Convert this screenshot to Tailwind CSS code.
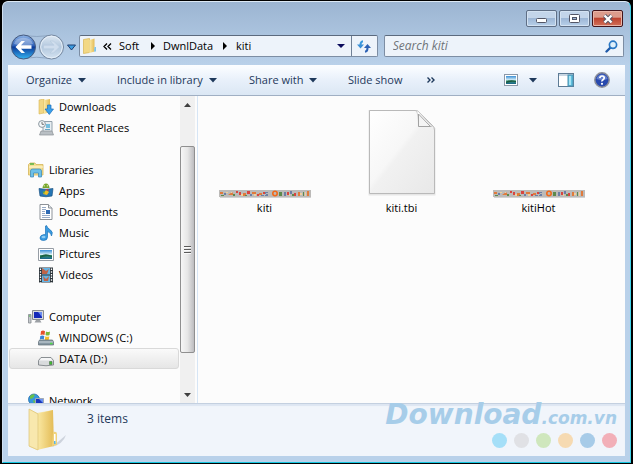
<!DOCTYPE html>
<html lang="en">
  <head>
    <meta charset="UTF-8" />
    <meta name="viewport" content="width=device-width, initial-scale=1.0" />
    <title>kiti</title>
    <script src="https://cdn.jsdelivr.net/npm/@tailwindcss/browser@4"></script>
  </head>

  <body class="bg-black font-['Open_Sans','Noto_Sans',sans-serif] text-[11px] leading-4 text-black">
    <!-- Shared drawings -->
    <svg class="absolute size-0">
      <defs>
        <linearGradient id="folder" x1="0" x2="1" y1="0" y2="0">
          <stop offset="0" stop-color="#fbeaa6" />
          <stop offset="1" stop-color="#e3bb55" />
        </linearGradient>
        <linearGradient id="blueBall" x1="0" x2="0" y1="0" y2="1">
          <stop offset="0" stop-color="#8fb4e6" />
          <stop offset="0.45" stop-color="#2c5fb8" />
          <stop offset="0.5" stop-color="#0b3a99" />
          <stop offset="1" stop-color="#35b5f2" />
        </linearGradient>
        <linearGradient id="grayBall" x1="0" x2="0" y1="0" y2="1">
          <stop offset="0" stop-color="#dfe9f3" />
          <stop offset="0.5" stop-color="#b3c8de" />
          <stop offset="1" stop-color="#d5e3f1" />
        </linearGradient>
        <linearGradient id="paper" x1="0" x2="1" y1="0" y2="1">
          <stop offset="0" stop-color="#ffffff" />
          <stop offset="0.45" stop-color="#f7f7f7" />
          <stop offset="0.5" stop-color="#f1f1f1" />
          <stop offset="1" stop-color="#e8e8e8" />
        </linearGradient>
        <linearGradient id="sky" x1="0" x2="0" y1="0" y2="1">
          <stop offset="0" stop-color="#3a8fd6" />
          <stop offset="0.5" stop-color="#d9f0f7" />
          <stop offset="0.6" stop-color="#3f9a79" />
          <stop offset="1" stop-color="#16618a" />
        </linearGradient>
      </defs>
      <symbol id="strip" viewBox="0 0 92 8">
        <rect width="92" height="7" fill="#bcbab8" />
        <g fill="#e07a3c">
          <path d="M1 2h3v2h-3zM9 5l4-3 2 3zM24 3h3v3h-3zM33 2h4v2h-4zM40 3h3v2h-3zM79 2h2v4h-2zM88 1h2v5h-2z" />
        </g>
        <g fill="#d8453f">
          <path d="M17 1h2v2h-2zM20 2h2v3h-2zM28 1h3v3h-3zM38 4h2v2h-2zM44 2h2v2h-2zM68 2h2v3h-2zM75 3h2v3h-2z" />
        </g>
        <g fill="#5d8a4c">
          <path d="M2 5h3v1h-3zM14 4h2v2h-2zM26 5h2v1h-2zM60 2h3v4h-3zM73 4h2v2h-2zM84 2h1v4h-1z" />
        </g>
        <g fill="#6c7fa6">
          <path d="M5 3h2v2h-2zM31 4h2v2h-2zM46 2h3v1h-2v1h2v2h-3v-1h1v-1h-1zM42 5h3v1h-3zM65 2h2v4h-2zM71 1h2v3h-2z" />
        </g>
        <g fill="#f0cf9c">
          <path d="M7 2h2v1h-2zM12 2h1v1h-1zM22 4h2v2h-2zM35 4h2v2h-2zM70 4h1v2h-1zM81 3h2v2h-2zM86 2h1v4h-1z" />
        </g>
        <circle cx="56" cy="3.5" r="2.2" fill="none" stroke="#f06a1c" stroke-width="1.6" />
        <path d="M1 7h91v1H1z" fill="#d2d2d2" />
      </symbol>
      <symbol id="caret" viewBox="0 0 8 5">
        <path d="M0 0h8L4 4.500z" fill="#1e395b" />
      </symbol>
    </svg>

    <div class="flex h-screen min-h-[320px] flex-col overflow-hidden rounded-t-md border-t border-r-2 border-b border-l-2 border-black bg-black">
      <div class="flex min-h-0 flex-1 flex-col rounded-t-md border-t border-r border-b border-l border-t-[#dce9f5] border-r-[#3fd3ea] border-b-[#15c6e0] border-l-[#cfdff0] bg-[#b9d1ea] bg-linear-to-b from-[#9cb5d2] to-[#b9d1ea] to-[64px] px-[5px] pb-[6px]">
        <!-- Window buttons -->
        <div class="flex h-[33px] shrink-0 items-start justify-end gap-[2px] pt-2 pr-[2px]">
          <button aria-label="Minimize" class="flex h-[17px] w-[31px] items-center justify-center rounded-[2px] border border-[#5f6f86] bg-linear-to-b from-[#c3d5ea] from-45% via-[#9db7d6] via-50% to-[#b8d0ea] shadow-[inset_0_0_0_1px_#d3e2f2]">
            <svg class="mt-[4px] h-[5px] w-[11px]" viewBox="0 0 11 5"><rect x="0.5" y="0.5" width="10" height="4" rx="1" fill="#fff" stroke="#535666" /></svg>
          </button>
          <button aria-label="Maximize" class="flex h-[17px] w-[31px] items-center justify-center rounded-[2px] border border-[#5f6f86] bg-linear-to-b from-[#c3d5ea] from-45% via-[#9db7d6] via-50% to-[#b8d0ea] shadow-[inset_0_0_0_1px_#d3e2f2]">
            <svg class="h-[9px] w-[11px]" viewBox="0 0 11 9"><rect x="0.5" y="0.5" width="10" height="8" rx="1" fill="#fff" stroke="#535666" /><rect x="3.500" y="3.500" width="4" height="2" fill="#9db7d6" stroke="#535666" /></svg>
          </button>
          <button aria-label="Close" class="flex h-[17px] w-[31px] items-center justify-center rounded-[2px] border border-[#43141a] bg-linear-to-b from-[#dc9c8c] from-40% via-[#bd4430] via-50% to-[#d2705a] shadow-[inset_0_0_0_1px_#e8b5a8]">
            <svg class="h-[10px] w-[12px]" viewBox="0 0 12 10"><path d="M2.500 1.500l7 7M9.500 1.500l-7 7" stroke="#535666" stroke-width="4.200" /><path d="M2.500 1.500l7 7M9.500 1.500l-7 7" stroke="#fff" stroke-width="2.400" /></svg>
          </button>
        </div>

        <!-- Navigation row -->
        <div class="flex h-[30px] shrink-0 items-start pr-px">
          <div class="flex w-[71px] shrink-0 items-center pl-px">
            <svg class="-mt-px h-[26px] w-[68px]" viewBox="0 0 68 26" fill="none">
              <path d="M13 1.500Q28 3.500 42 1.500M13 24.500Q28 22 42 24.500" stroke="#8ea6c2" />
              <circle cx="14.500" cy="13" r="12" fill="url(#blueBall)" stroke="#44597e" />
              <path d="M5 10a10 9 0 0 1 19 0q-9 3-19 0z" fill="#fff" fill-opacity="0.3" />
              <path d="M6.500 13l6-6h3.500l-4 4.200h10.500v3.600H12l4 4.200h-3.500z" fill="#fff" />
              <circle cx="42.500" cy="13" r="12" fill="url(#grayBall)" stroke="#74869e" />
              <circle cx="42.500" cy="13" r="10.800" stroke="#e6eff8" />
              <path d="M50.500 13l-6-6H41l4 4.200H34.500v3.600H45l-4 4.200h3.500z" fill="#cfdded" stroke="#b5c9dd" stroke-width="0.600" />
              <path d="M58.500 11h8l-4 5z" fill="#3c9ce0" stroke="#1f3f72" />
            </svg>
          </div>
          <div class="flex h-[22px] min-w-0 flex-1 items-stretch rounded-[2px] border border-[#7c8da3] border-t-[#5b6a7e] bg-[#edf3fa]">
            <div class="flex min-w-0 flex-1 items-center pl-[3px]">
              <svg class="h-4 w-[14px]" viewBox="0 0 14 16"><path d="M0.500 1.500l6-1v14l-6 1z" fill="#f2d885" stroke="#d8b552" stroke-width="0.700" /><path d="M6.500 2l5-1.500v13l-5 1.500z" fill="url(#folder)" /><path d="M11.500 9h1.500v4.500h-2z" fill="#7fc4ea" /></svg>
              <button aria-label="Previous locations" class="ml-[6px] h-5 w-[9px]"><svg class="h-[7px] w-[9px]" viewBox="0 0 9 7" fill="none" stroke="#000" stroke-width="1.300"><path d="M4 0.500l-3 3 3 3M8 0.500l-3 3 3 3" /></svg></button>
              <button class="ml-[7px] w-[24px] text-left">Soft</button>
              <svg class="ml-2 h-[8px] w-[4px]" viewBox="0 0 4 8"><path d="M0 0l4 4-4 4z" /></svg>
              <button class="ml-[8px] w-[54px] text-left whitespace-nowrap">DwnlData</button>
              <svg class="ml-[6px] h-[8px] w-[4px]" viewBox="0 0 4 8"><path d="M0 0l4 4-4 4z" /></svg>
              <button class="ml-[9px]">kiti</button>
              <button aria-label="Address history" class="mr-[6px] ml-auto h-5"><svg class="h-[4px] w-[8px]" viewBox="0 0 8 4"><path d="M0 0h8L4 4z" fill="#0b0b5c" /></svg></button>
            </div>
            <button aria-label="Refresh" class="flex w-[26px] items-center justify-center border-l border-[#6f8096]">
              <svg class="h-[13px] w-[14px]" viewBox="0 0 14 13" fill="none"><path d="M6 1.200Q3.500 1.500 3.500 5" stroke="#3a9ade" stroke-width="2" /><path d="M0 4.500h7L3.500 8.500z" fill="#3a8fd6" /><path d="M8 11.800Q10.500 11.500 10.500 8" stroke="#2d62b5" stroke-width="2" /><path d="M7 8h7L10.500 4z" fill="#2d62b5" /></svg>
            </button>
          </div>
          <div class="ml-[6px] flex h-[22px] shrink-0 basis-[39%] items-center rounded-[2px] border border-[#7c8da3] border-t-[#5b6a7e] bg-[#edf3fa] pr-[5px] pl-2">
            <input type="text" aria-label="Search kiti" placeholder="Search kiti" class="min-w-0 flex-1 bg-transparent text-xs italic outline-none placeholder:text-[#6f7379]" />
            <svg class="h-[13px] w-[13px]" viewBox="0 0 13 13" fill="none"><path d="M5.500 7.500L1.500 11.500" stroke="#1f5aa8" stroke-width="2.400" stroke-linecap="round" /><circle cx="8" cy="4.800" r="3.600" fill="#dff0fb" stroke="#2a78c4" stroke-width="1.700" /></svg>
          </div>
        </div>

        <!-- Command bar -->
        <div class="flex h-[31px] shrink-0 items-center border-t border-b border-t-[#fbfdff] border-b-[#a0afc3] bg-linear-to-b from-[#f9fcff] from-5% via-[#e8f0fa] via-50% to-[#dbe7f4] pb-px pl-[18px] text-[#1e395b]">
          <button class="flex w-[91px] items-center gap-[6px]">Organize<svg class="h-[5px] w-2"><use href="#caret" /></svg></button>
          <button class="flex w-[132px] items-center gap-[6px] whitespace-nowrap">Include in library<svg class="h-[5px] w-2"><use href="#caret" /></svg></button>
          <button class="flex w-[99px] items-center gap-[6px] whitespace-nowrap">Share with<svg class="h-[5px] w-2"><use href="#caret" /></svg></button>
          <button class="w-[79px] text-left whitespace-nowrap">Slide show</button>
          <button aria-label="More commands"><svg class="h-[6px] w-2" viewBox="0 0 8 6" fill="none" stroke="#1e395b" stroke-width="1.400"><path d="M0.500 0.500l2.500 2.500-2.500 2.500M4.500 0.500l2.500 2.500-2.500 2.500" /></svg></button>
          <div class="mr-[15px] ml-auto flex items-center">
            <button aria-label="Change your view"><svg class="h-3 w-[14px]" viewBox="0 0 14 12"><rect x="0.500" y="0.500" width="13" height="11" fill="#fff" stroke="#8b98a8" /><rect x="2" y="2" width="10" height="8" fill="url(#sky)" /><path d="M2 8q4-3 10-1v1q-5-1-10 1z" fill="#1c5a41" /></svg></button>
            <button aria-label="View options" class="ml-[11px]"><svg class="h-[5px] w-2"><use href="#caret" /></svg></button>
            <button aria-label="Preview pane" class="ml-[21px]"><svg class="h-[14px] w-4" viewBox="0 0 16 14"><rect x="0.500" y="0.500" width="15" height="13" fill="#fff" stroke="#5d7b95" /><rect x="1" y="1" width="14" height="2" fill="#c8d6e2" /><rect x="10" y="2" width="5" height="11" fill="#5fbfdd" stroke="#4a8fb0" /><rect x="11" y="3" width="2" height="9" fill="#a8e4f4" /></svg></button>
            <button aria-label="Get help" class="ml-5"><svg class="h-4 w-4" viewBox="0 0 16 16" fill="none"><circle cx="8" cy="8" r="7.200" fill="#2749ae" stroke="#8c8f99" stroke-width="1.500" /><path d="M2.500 7a5.600 5.600 0 0 1 11 0q-5 2-11 0z" fill="#8fa7e2" fill-opacity="0.600" /><path d="M5.800 6.200Q6 4 8.100 4t2.100 2q0 1-1.200 1.800T8 9.500" stroke="#fff" stroke-width="1.700" /><circle cx="8" cy="11.800" r="1.100" fill="#fff" /></svg></button>
          </div>
        </div>

        <div class="flex min-h-0 flex-1 bg-[#fcfcfc]">
          <!-- Navigation pane -->
          <nav class="w-[172px] shrink-0 overflow-hidden px-px">
            <ul class="leading-[21px]">
              <li><a href="#" class="flex h-[21px] items-center gap-[5px] pl-[29px]">
                <svg class="h-4 w-4" viewBox="0 0 16 16"><path d="M1 1l5-1v14l-5 1z" fill="#f2d885" stroke="#d8b552" stroke-width="0.600" /><path d="M6 1l6-1v13l-6 2z" fill="url(#folder)" /><path d="M9.500 6h3.500v4h2.500l-4.200 5.500L7 10h2.500z" fill="#3aa0ea" stroke="#1b6dbb" stroke-width="0.700" /></svg>Downloads</a></li>
              <li><a href="#" class="flex h-[21px] items-center gap-[5px] pl-[29px]">
                <svg class="h-4 w-4" viewBox="0 0 16 16"><path d="M5 1.500h9v10H5z" fill="#e8eef2" stroke="#93a1ab" /><path d="M8 4h4v4H8z" fill="#76bede" /><path d="M7 9.500h5" stroke="#68a7c4" /><path d="M3 11h11l1.500 4H1.500z" fill="#b9bfc4" stroke="#8a9095" stroke-width="0.700" /><circle cx="4" cy="4" r="3.400" fill="#f4f8fa" stroke="#8b979f" /><path d="M4 2v2.300h2" fill="none" stroke="#555" stroke-width="0.800" /></svg>Recent Places</a></li>
              <li class="mt-[21px]"><a href="#" class="flex h-[21px] items-center gap-[5px] pl-[19px]">
                <svg class="h-4 w-4" viewBox="0 0 16 16"><path d="M0.500 13V2.500L2 1h5l1 1.500h7V13z" fill="#f4df92" stroke="#d4b458" stroke-width="0.800" /><path d="M2 2h4" stroke="#52b243" stroke-width="1.300" /><path d="M1 5h14" stroke="#fff8d8" /><path d="M2.500 15V9Q2.500 7 4.500 7h7q2 0 2 2v6h-3v-4h-5v4z" fill="#6dc0e8" stroke="#3485b8" stroke-width="0.700" /></svg>Libraries</a></li>
              <li><a href="#" class="flex h-[21px] items-center gap-[5px] pl-[29px]">
                <svg class="h-4 w-4" viewBox="0 0 16 16"><path d="M4.500 5Q5 0.500 8 0.500T11.500 5z" fill="#79a72a" /><circle cx="6.200" cy="2.800" r="0.600" fill="#fff" /><circle cx="9.300" cy="2.800" r="0.600" fill="#fff" /><path d="M1 5.500q7 1.500 14 0l-1 7.500q-6 1.500-12 0z" fill="#2676b5" stroke="#1a5283" stroke-width="0.700" /><path d="M5 11l3-4 3 2-2 3z" fill="#f0bd22" /><path d="M7 7l3-1 1 2z" fill="#d9382e" /><path d="M4.500 9l2-1v3z" fill="#65b13a" /></svg>Apps</a></li>
              <li><a href="#" class="flex h-[21px] items-center gap-[5px] pl-[29px]">
                <svg class="h-4 w-4" viewBox="0 0 16 16"><path d="M2 0.500h8.500L14 4v11.500H2z" fill="#fff" stroke="#8d9298" /><path d="M10.500 0.500V4H14" fill="#e4e8ec" stroke="#8d9298" /><path d="M4 3.500h4M4 5.500h4M4 7.500h3M4 9.500h3M4 11.500h8M4 13.500h8" stroke="#8aa0c0" stroke-width="0.900" /><path d="M8 6h4v4H8z" fill="#2d6ab4" /></svg>Documents</a></li>
              <li><a href="#" class="flex h-[21px] items-center gap-[5px] pl-[29px]">
                <svg class="h-4 w-4" viewBox="0 0 16 16"><path d="M8.500 0.500q1 3 4 4.500 3 2 1 6 0-3-4-4.500V12q0 3.500-4 3.500-3.500 0-3.500-2.500 0-3 4-3.500 1 0 1.500 0.300V1z" fill="#3a9be0" stroke="#1d72b8" stroke-width="0.700" /><ellipse cx="5.500" cy="12" rx="2" ry="1.200" fill="#8ccbf3" /></svg>Music</a></li>
              <li><a href="#" class="flex h-[21px] items-center gap-[5px] pl-[29px]">
                <svg class="h-4 w-4" viewBox="0 0 16 16"><path d="M0.500 2.500h15v12H0.500z" fill="#fff" stroke="#969da5" /><path d="M2 4h12v9H2z" fill="url(#sky)" /><path d="M2 10.500Q7 6.500 14 10v1q-6-2-12 1z" fill="#1d6343" /></svg>Pictures</a></li>
              <li><a href="#" class="flex h-[21px] items-center gap-[5px] pl-[29px]">
                <svg class="h-4 w-4" viewBox="0 0 16 16"><path d="M1 0.500h14v15H1z" fill="#2d353b" /><path d="M4 1h8v6.500H4zM4 8.500h8V15H4z" fill="#65b4e4" /><path d="M4 1l4 3 3-2-2 5H4zM5 9l3 3 3-3-1 5H6z" fill="#bf6448" /><path d="M2.500 1.500v14M13.500 1.500v14" stroke="#fff" stroke-width="1.300" stroke-dasharray="1.500 1.200" /></svg>Videos</a></li>
              <li class="mt-[21px]"><a href="#" class="flex h-[21px] items-center gap-[5px] pl-[19px]">
                <svg class="h-4 w-4" viewBox="0 0 16 16"><path d="M4.500 1.500h11v9h-11z" fill="#d8dadd" stroke="#868b91" /><path d="M6 3h8v6H6z" fill="#1429b8" /><path d="M10 3h4v5z" fill="#6b8cf0" /><path d="M8 11h4l1.500 2.500h-7z" fill="#9ca0a5" /><path d="M0.500 5.500h2.500v8.500H0.500z" fill="#c6cacd" stroke="#84898e" stroke-width="0.800" /><path d="M1 7h1.500" stroke="#3db03d" /></svg>Computer</a></li>
              <li><a href="#" class="flex h-[21px] items-center gap-[5px] pl-[29px]">
                <svg class="h-4 w-4" viewBox="0 0 16 16"><path d="M3 1.200q2-1.200 4 0L6.500 5q-2-1-4 0z" fill="#e6502c" /><path d="M8 1.500q2 1 4 0L11.500 5q-2 1-4 0z" fill="#7bb83a" /><path d="M2.300 6q2-1 4 0L5.800 9.500q-2-1-4 0z" fill="#3a84d8" /><path d="M7.300 6.200q2 1 4 0L10.800 9.800q-2 1-4 0z" fill="#f5bd2b" /><path d="M1.500 10h13l1 2v3h-15v-3z" fill="#8798a4" stroke="#5c6a74" stroke-width="0.700" /><path d="M1 12h14" stroke="#cbd5db" /><path d="M12 13.500h2.500" stroke="#4fdd4a" stroke-width="1.500" /></svg>WINDOWS (C:)</a></li>
              <li><a href="#" class="flex h-[21px] items-center gap-[5px] rounded-[3px] border border-[#d9d9d9] bg-linear-to-b from-[#fafafa] to-[#e6e6e6] pl-[28px]">
                <svg class="h-4 w-4" viewBox="0 0 16 16"><path d="M3 6.500h10l2.500 3v4.500Q8 15.500 0.500 14V9.500z" fill="#d9dbdd" stroke="#7f8489" stroke-width="0.900" /><path d="M3.300 7h9.400l1.800 2.500h-13z" fill="#f5f6f7" /><path d="M11.500 10.500h2.500v3h-2.500z" fill="#3fbf2f" stroke="#526b50" stroke-width="0.600" /></svg>DATA (D:)</a></li>
              <li class="mt-[21px]"><a href="#" class="flex h-[21px] items-center gap-[5px] pl-[19px]">
                <svg class="h-4 w-4" viewBox="0 0 16 16"><circle cx="6" cy="6.500" r="5.500" fill="#3697dc" stroke="#1c64a5" stroke-width="0.700" /><path d="M2 3q3-3 5-1L5 5l-3 1zM5 7l3 1-2 3z" fill="#68c04a" /><path d="M7.500 5.500h8v7h-8z" fill="#1837bd" stroke="#a1aab4" /><path d="M11 6h4v4z" fill="#6c94f2" /></svg>Network</a></li>
            </ul>
          </nav>
          <div class="flex w-[15px] shrink-0 flex-col bg-[#f0f0f0]">
            <button aria-label="Scroll up" class="flex h-[17px] items-center justify-center"><svg class="h-1 w-[7px]" viewBox="0 0 7 4"><path d="M0 4h7L3.500 0z" fill="#404040" /></svg></button>
            <div class="mt-[33px] flex h-[207px] flex-col items-center justify-center gap-px rounded-[2px] border border-[#8f8f8f] bg-linear-to-r from-[#f6f6f6] via-[#e6e6e6] to-[#bdbdc0]">
              <span class="h-[2px] w-[7px] border-b border-[#fafafa] bg-[#5a5a5a]"></span>
              <span class="h-[2px] w-[7px] border-b border-[#fafafa] bg-[#5a5a5a]"></span>
              <span class="h-[2px] w-[7px] border-b border-[#fafafa] bg-[#5a5a5a]"></span>
            </div>
            <button aria-label="Scroll down" class="mt-auto flex h-[17px] items-center justify-center"><svg class="h-1 w-[7px]" viewBox="0 0 7 4"><path d="M0 0h7L3.500 4z" fill="#404040" /></svg></button>
          </div>
          <div class="ml-[2px] w-px shrink-0 bg-[#d6e5f5]"></div>

          <!-- Files -->
          <main class="flex min-w-0 flex-1 items-start gap-4 overflow-hidden pt-[6px] pl-[6px]">
            <figure class="flex w-[121px] shrink-0 flex-col items-center">
              <div class="flex h-24 items-end"><svg class="h-2 w-[92px]"><use href="#strip" /></svg></div>
              <figcaption class="mt-[2px]">kiti</figcaption>
            </figure>
            <figure class="flex w-[121px] shrink-0 flex-col items-center">
              <div class="flex h-24 items-end pb-[2px]">
                <svg class="h-[87px] w-[68px]" viewBox="0 0 68 87"><path d="M2 2.500h46L66 20v65H2z" fill="none" stroke="#e6e6e6" stroke-width="3" /><path d="M1.500 1.500H47Q50 1.500 52 4l12 12q2.500 2 2.500 5v63.500h-65z" fill="url(#paper)" stroke="#b9b9b9" /><path d="M48.500 2q2 4 2 15.500H64L50 2z" fill="#fff" stroke="#c7c7c7" stroke-width="0.800" /><path d="M50.500 5v12.500h12z" fill="#f4f4f4" stroke="#a2a2a2" /></svg>
              </div>
              <figcaption class="mt-[2px]">kiti.tbi</figcaption>
            </figure>
            <figure class="flex w-[121px] shrink-0 flex-col items-center">
              <div class="flex h-24 items-end"><svg class="h-2 w-[92px]"><use href="#strip" /></svg></div>
              <figcaption class="mt-[2px]">kitiHot</figcaption>
            </figure>
          </main>
        </div>

        <!-- Details pane -->
        <footer class="flex h-[53px] shrink-0 items-start justify-between border-t border-[#c4d0e0] bg-[#f1f5fb] pr-2 pl-5 shadow-[inset_0_2px_1px_#dde6f2]">
          <div class="flex gap-[19px]">
            <svg class="mt-1 h-[43px] w-10" viewBox="0 0 40 43"><path d="M24 39l14-12q-3 9-14 12z" fill="#7c8694" fill-opacity="0.300" /><path d="M1 1l8 4 16-3v34L9 42l-8-3.500z" fill="#f5e3a0" /><path d="M9 6l16-4 1 36L9 42z" fill="url(#folder)" /><path d="M1 1l9 5v36l-9-4z" fill="#f8e8ae" stroke="#dcc376" stroke-width="0.700" /><path d="M25 24q4-1 4 2v11l-5 1z" fill="#f0d27c" /><path d="M26 26h1.500v9H26z" fill="#fff" /><path d="M26 33h1.500v3H26z" fill="#55b5ea" /></svg>
            <p class="pt-[7px] text-xs text-[#1e395b]">3 items</p>
          </div>
          <div class="flex flex-col items-end gap-1">
            <p class="flex items-baseline font-['DejaVu_Sans',sans-serif] leading-[22px] font-bold text-[#a7cde9] italic"><span class="text-[28px]">Download</span><span class="text-[17px]">.com.vn</span></p>
            <div class="flex gap-[7px]">
              <span class="size-[15px] rounded-full bg-[#a5dff8]"></span>
              <span class="size-[15px] rounded-full bg-[#e0e1e5]"></span>
              <span class="size-[15px] rounded-full bg-[#cfe7bd]"></span>
              <span class="size-[15px] rounded-full bg-[#f6dab2]"></span>
              <span class="size-[15px] rounded-full bg-[#a7cbe8]"></span>
              <span class="size-[15px] rounded-full bg-[#f2afb8]"></span>
            </div>
          </div>
        </footer>
      </div>
    </div>
  </body>
</html>
